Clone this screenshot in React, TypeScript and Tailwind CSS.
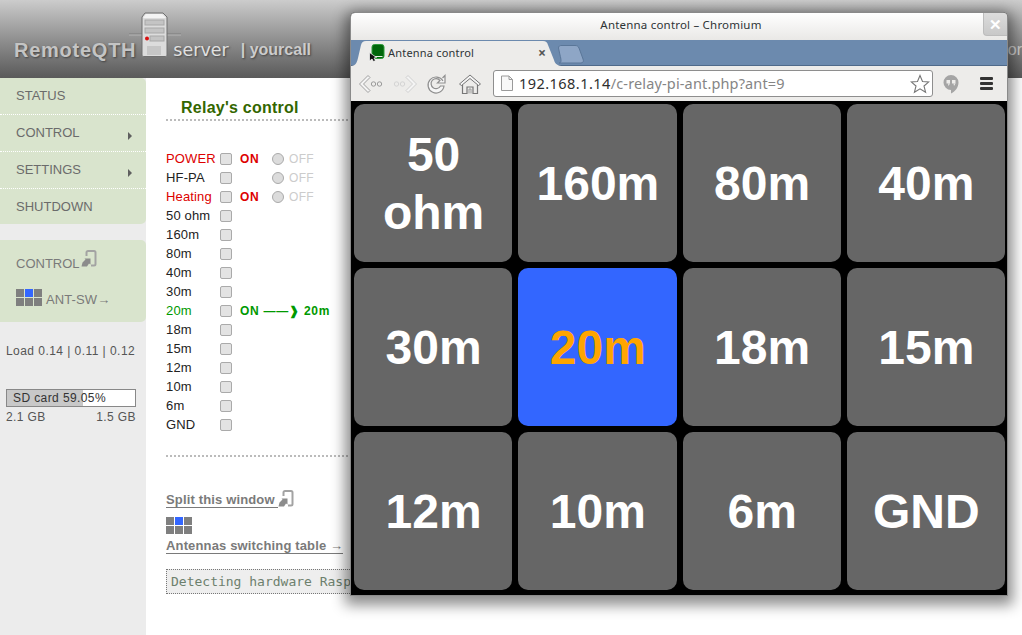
import React from "react";

const sans = "font-['Liberation_Sans',Arial,sans-serif]";

function GridIcon() {
  return (
    <div className="grid grid-cols-[8px_8px_8px] grid-rows-[8px_8px] gap-px">
      {[0, 1, 2, 3, 4, 5].map((i) => (
        <div key={i} className={i === 1 ? "bg-[#3366ff]" : "bg-[#7f7f7f]"} />
      ))}
    </div>
  );
}

function SplitIcon({ className = "" }: { className?: string }) {
  return (
    <svg width="16" height="17" viewBox="0 0 16 17" className={className}>
      <path d="M5.500 6V2.500C5.500 1.600 6.100 1 7 1H13c.9 0 1.500.6 1.500 1.500v11.500c0 .9-.6 1.500-1.500 1.500h-3" fill="none" stroke="#a3a3a3" strokeWidth="2" />
      <path d="M0.500 16.500L1.500 12.500L4.500 9.500L3.500 8.500H9.500V14.500L8 13.500L6 16.500Z" fill="#8c8c8c" />
    </svg>
  );
}

function ServerIcon() {
  return (
    <svg width="52" height="46" viewBox="0 0 52 46" className="shrink-0">
      <path d="M0 22H13M38 22H52" stroke="#7c7c7c" strokeWidth="1" />
      <path d="M0 23H13M38 23H52" stroke="#b4b4b4" strokeWidth="1" />
      <path d="M13 5L16 1H34L38 5V43C38 44 37 44.500 36 44.500H15C14 44.500 13 44 13 43Z" fill="#dcdcdc" stroke="#6f6f6f" strokeWidth="1" />
      <path d="M14 6L17 2H33L37 6Z" fill="#f3f3f3" />
      <rect x="16" y="8" width="19" height="5" fill="#c4c4c4" stroke="#a8a8a8" />
      <rect x="16" y="16" width="19" height="5" fill="#c4c4c4" stroke="#a8a8a8" />
      <rect x="21" y="24" width="14" height="5" fill="#c4c4c4" stroke="#a8a8a8" />
      <circle cx="18" cy="26.500" r="2" fill="#d81010" />
      <path d="M19 34V43M21 34V43M23 34V43M25 34V43M27 34V43M29 34V43M31 34V43" stroke="#b0b0b0" strokeWidth="1" />
    </svg>
  );
}

function Box() {
  return <span className="block h-[12px] w-[12px] rounded-[2px] border border-[#aaaaaa] bg-[#e3e3e3] shrink-0" />;
}

function OnOff({ on }: { on: boolean }) {
  return (
    <div className="flex items-center">
      <span className={`w-[32px] text-[12px] font-bold text-[#dd0000] tracking-[0.7px] ${on ? "" : "invisible"}`}>ON</span>
      <span className="block h-[12px] w-[12px] rounded-full border border-[#aaaaaa] bg-[#dcdcdc]" />
      <span className="ml-[5px] text-[12px] tracking-[0.3px] text-[#cccccc]">OFF</span>
    </div>
  );
}

const rows: { label: string; color?: string; extra?: React.ReactNode }[] = [
  { label: "POWER", color: "text-[#dd0000]", extra: <OnOff on /> },
  { label: "HF-PA", extra: <OnOff on={false} /> },
  { label: "Heating", color: "text-[#dd0000]", extra: <OnOff on /> },
  { label: "50 ohm" },
  { label: "160m" },
  { label: "80m" },
  { label: "40m" },
  { label: "30m" },
  {
    label: "20m",
    color: "text-[#009900]",
    extra: <span className="text-[12px] font-bold text-[#009900] tracking-[0.75px]">ON ——❱ 20m</span>,
  },
  { label: "18m" },
  { label: "15m" },
  { label: "12m" },
  { label: "10m" },
  { label: "6m" },
  { label: "GND" },
];

const buttons = ["50 ohm", "160m", "80m", "40m", "30m", "20m", "18m", "15m", "12m", "10m", "6m", "GND"];

function Sidebar() {
  const item = "flex items-center pl-[16px] pr-[14px] justify-between text-[13px] text-[#6b6b6b]";
  const arrow = <span className="mt-[5px] h-0 w-0 border-y-[4px] border-l-[4px] border-y-transparent border-l-[#5f5f5f]" />;
  return (
    <aside className="w-[146px] shrink-0 bg-[#ececec] text-[#555555]">
      <nav className="overflow-hidden rounded-r-[5px] bg-[#d9e4cd]">
        <div className={`${item} h-[37px] border-b border-dotted border-white`}>STATUS</div>
        <div className={`${item} h-[37px] border-b border-dotted border-white`}>CONTROL{arrow}</div>
        <div className={`${item} h-[37px] border-b border-dotted border-white`}>SETTINGS{arrow}</div>
        <div className={`${item} h-[35px]`}>SHUTDOWN</div>
      </nav>
      <div className="mt-[16px] h-[82px] rounded-r-[5px] bg-[#d9e4cd] pl-[16px] text-[13px] text-[#7a7a7a]">
        <div className="flex items-start gap-[3px] pt-[10px]">
          <span className="pt-[4px]">CONTROL</span>
          <SplitIcon className="-ml-[2px]" />
        </div>
        <div className="mt-[15px] flex items-start gap-[4px]">
          <GridIcon />
          <span className="mt-[4px] leading-[14px] tracking-[0.1px]">ANT-SW→</span>
        </div>
      </div>
      <div className="mt-[21px] pl-[6px] text-[12px] leading-[16px] text-[#555555] tracking-[0.45px]">Load 0.14 | 0.11 | 0.12</div>
      <div className="ml-[6px] mt-[30px] w-[130px] text-[12px] tracking-[0.4px]">
        <div className="relative h-[18px] border border-[#888888] bg-white">
          <div className="absolute inset-y-0 left-0 w-[59%] bg-[#c8c8c8]" />
          <div className="relative pl-[6px] leading-[16px] text-[#333333]">SD card 59.05%</div>
        </div>
        <div className="mt-[1px] flex justify-between leading-[18px] text-[#555555]">
          <span>2.1 GB</span>
          <span>1.5 GB</span>
        </div>
      </div>
    </aside>
  );
}

function Main() {
  return (
    <main className="min-w-0 flex-1 pl-[20px] pr-[14px]">
      <h2 className="pl-[15px] pt-[21px] text-[16px] font-bold leading-[18px] tracking-[0.25px] text-[#336600]">Relay's control</h2>
      <div className="mt-[2px] border-t-2 border-dotted border-[#bbbbbb]" />
      <div className="mt-[28px]">
        {rows.map((r) => (
          <div key={r.label} className="flex h-[19px] items-center text-[13px] tracking-[0.15px]">
            <span className={`w-[54px] ${r.color ?? "text-[#222222]"}`}>{r.label}</span>
            <Box />
            <div className="ml-[8px]">{r.extra}</div>
          </div>
        ))}
      </div>
      <div className="mt-[21px] border-t-2 border-dotted border-[#bbbbbb]" />
      <div className="mt-[33px] text-[13px] font-bold text-[#7a7a7a] tracking-[0.15px]">
        <div className="flex items-end">
          <span className="border-b border-[#7a7a7a] leading-[14px]">Split this window&nbsp;</span>
          <SplitIcon className="mb-[1px]" />
        </div>
        <div className="mt-[9px]"><GridIcon /></div>
        <div className="mt-[2px]"><span className="inline-block border-b border-[#7a7a7a] leading-[14px]">Antennas switching table →</span></div>
      </div>
      <div className="mt-[13px] h-[25px] overflow-hidden whitespace-nowrap border border-dotted border-[#777777] bg-[#eeeeee] pl-[4px] font-['DejaVu_Sans_Mono',monospace] text-[13px] leading-[23px] text-[#6d806d]">
        Detecting hardware Raspberry Pi
      </div>
    </main>
  );
}

function BrowserWindow() {
  return (
    <div className="absolute left-[350px] top-[12px] flex h-[584px] w-[658px] flex-col overflow-hidden rounded-t-[5px] border border-[#8a8a8a] bg-black font-['Noto_Sans',sans-serif] shadow-[0_4px_14px_5px_rgba(0,0,0,0.45)]">
      <div className="relative flex h-[27px] shrink-0 items-center justify-center bg-gradient-to-b from-white to-[#e9e8e6] pb-[3px] pl-[4px] text-[11.500px] tracking-[0.2px] text-[#2e3436]">
        Antenna control – Chromium
        <div className="absolute right-0 top-0 flex h-[23px] w-[24px] items-center justify-center rounded-bl-[4px] border-b border-l border-[#bcbcbc] bg-gradient-to-b from-[#dcdcdc] to-[#c8c8c8] text-[15px] font-bold leading-none text-white">✕</div>
      </div>
      <div className="relative flex h-[26px] shrink-0 items-end border-b border-[#4f6a8a] bg-[#6c8aae]">
        <div className="relative flex h-[24px] w-[214px] items-center pl-[18px]">
          <svg width="214" height="25" viewBox="0 0 214 25" className="absolute left-0 top-0">
            <path d="M0 25C5 25 6 21 7 17L10 4C11 1 12 0 15 0H192C195 0 196 1 197 4L203 19C204 23 207 25 212 25Z" fill="#edecea" />
          </svg>
          <svg width="17" height="18" viewBox="0 0 17 18" className="relative mr-[2px]">
            <rect x="3" y="0.500" width="12" height="14" rx="2.500" fill="#00660a" stroke="#2f9a3a" />
            <path d="M4.500 12.500H13.500" stroke="#e8f4e8" strokeWidth="1" />
            <path d="M0.500 8.500L0.500 17L3 15L4.500 17.500L6.500 16.500L5 14L7.500 13.500Z" fill="#111111" stroke="#ffffff" strokeWidth="0.7" />
          </svg>
          <span className="relative text-[11px] tracking-[0.2px] text-[#2e3436]">Antenna control</span>
          <span className="absolute left-[187px] top-[4px] text-[14px] font-bold leading-[16px] text-[#555555]">×</span>
        </div>
        <svg width="28" height="19" viewBox="0 0 28 19" className="mb-[1px] ml-[-7px]">
          <path d="M1 18C4 18 3 14 2 10L0.500 3C0.500 1 2 0.500 3 0.500H17C19 0.500 20 1 21 3L25 14C26 16 25 18 23 18Z" fill="#8ea6c6" stroke="#5a7698" />
        </svg>
      </div>
      <div className="flex h-[35px] shrink-0 items-center bg-[#edecea] pl-[7px] pr-[13px]">
        <svg width="26" height="22" viewBox="0 0 26 22">
          <path d="M10 2.500L1.500 11L10 19.500L12 17.500L5.500 11L12 4.500Z" fill="#f4f4f4" stroke="#a0a0a0" strokeWidth="1" />
          <circle cx="15.500" cy="11" r="2.200" fill="none" stroke="#9a9a9a" />
          <circle cx="21.500" cy="11" r="2.200" fill="none" stroke="#9a9a9a" />
        </svg>
        <svg width="26" height="22" viewBox="0 0 26 22" className="ml-[8px]">
          <path d="M16 2.500L24.500 11L16 19.500L14 17.500L20.500 11L14 4.500Z" fill="#f4f4f4" stroke="#d0d0d0" strokeWidth="1" />
          <circle cx="10.500" cy="11" r="2.200" fill="none" stroke="#d4d4d4" />
          <circle cx="4.500" cy="11" r="2.200" fill="none" stroke="#d4d4d4" />
        </svg>
        <svg width="22" height="22" viewBox="0 0 22 22" className="ml-[7px]">
          <path d="M18 8A8 8 0 1 0 19 13H15.500A5 5 0 1 1 15 7.500L12.500 10H20V2.500L17.500 5" fill="#f6f6f6" stroke="#8f8f8f" strokeWidth="1.200" />
        </svg>
        <svg width="24" height="22" viewBox="0 0 24 22" className="ml-[11px]">
          <path d="M1.500 11L12 2L22.500 11L20.500 12.500L12 5.500L3.500 12.500Z" fill="#f4f4f4" stroke="#777777" />
          <path d="M4.500 12V20.500H9V14H15V20.500H19.500V12" fill="none" stroke="#777777" strokeWidth="1.200" />
          <path d="M11 20.500V16H13V20.500" fill="none" stroke="#9a9a9a" />
        </svg>
        <div className="ml-[11px] flex h-[27px] w-[440px] items-center rounded-[3px] border border-[#8e8e8e] bg-white pl-[6px] pr-[2px] text-[14.500px]">
          <svg width="14" height="17" viewBox="0 0 14 17" className="mr-[5px] shrink-0">
            <path d="M1.500 1H9L12.500 4.500V15.500H1.500Z" fill="#f8f8f8" stroke="#9a9a9a" />
            <path d="M9 1V4.500H12.500" fill="none" stroke="#9a9a9a" />
          </svg>
          <span className="tracking-[0.45px] text-[#2e2e2e]">192.168.1.14</span>
          <span className="tracking-[0.01em] text-[#858585]">/c-relay-pi-ant.php?ant=9</span>
          <svg width="20" height="20" viewBox="0 0 20 20" className="ml-auto shrink-0">
            <path d="M10 1.500L12.500 7.500L18.800 7.900L14 12L15.600 18.300L10 14.900L4.400 18.300L6 12L1.200 7.900L7.500 7.500Z" fill="#ffffff" stroke="#777777" strokeWidth="1.100" />
          </svg>
        </div>
        <svg width="18" height="20" viewBox="0 0 18 20" className="ml-[9px]">
          <path d="M9 1A7.500 7.500 0 0 0 9 16V19.500C13 17.500 16.500 13.500 16.500 8.500A7.500 7.500 0 0 0 9 1Z" fill="#a5a5a5" />
          <rect x="4.500" y="6" width="3.500" height="3.500" fill="#edecea" />
          <rect x="10" y="6" width="3.500" height="3.500" fill="#edecea" />
          <path d="M6 9.500H8L6.500 12ZM11.500 9.500H13.500L12 12Z" fill="#edecea" />
        </svg>
        <div className="ml-auto mr-[1px] flex h-[13px] w-[13px] flex-col justify-between">
          <span className="h-[3px] rounded-[1px] bg-[#333333]" />
          <span className="h-[3px] rounded-[1px] bg-[#333333]" />
          <span className="h-[3px] rounded-[1px] bg-[#333333]" />
        </div>
      </div>
      <div className={`grid flex-1 grid-cols-4 grid-rows-3 gap-[6px] bg-black pl-[3px] pr-[2px] pb-[5px] pt-[3px] ${sans}`}>
        {buttons.map((b) => (
          <div
            key={b}
            className={`flex items-center justify-center rounded-[10px] pl-[10.500px] pr-[9.500px] pt-[1px] text-center text-[48px] font-bold leading-[58px] ${
              b === "20m" ? "bg-[#3366ff] text-[#ffa500]" : "bg-[#666666] text-white"
            }`}
          >
            {b}
          </div>
        ))}
      </div>
    </div>
  );
}

export default function App() {
  return (
    <div className={`relative flex h-[635px] w-[1022px] flex-col overflow-hidden bg-white ${sans}`}>
      <header className="flex h-[78px] shrink-0 items-end bg-gradient-to-b from-[#cccccc] to-[#5a5a5a] pb-[16px] pl-[14px] pr-0">
        <span className="text-[20px] font-bold leading-[24px] tracking-[0.75px] text-[#c4c4c4] [text-shadow:1px_1px_2px_#444]">RemoteQTH</span>
        <div className="ml-[-7px] mb-[4px]"><ServerIcon /></div>
        <span className="ml-[-8px] font-['DejaVu_Sans',sans-serif] text-[17.500px] leading-[24px] text-[#e0e0e0] [text-shadow:1px_1px_2px_#444]">server</span>
        <span className="ml-[12px] text-[16px] font-bold leading-[24px] text-[#cccccc] [text-shadow:1px_1px_2px_#444]">| yourcall</span>
        <span className="ml-auto text-[16px] leading-[24px] text-[#d0d0d0]">or</span>
      </header>
      <div className="flex flex-1 min-h-0">
        <Sidebar />
        <Main />
      </div>
      <BrowserWindow />
    </div>
  );
}
